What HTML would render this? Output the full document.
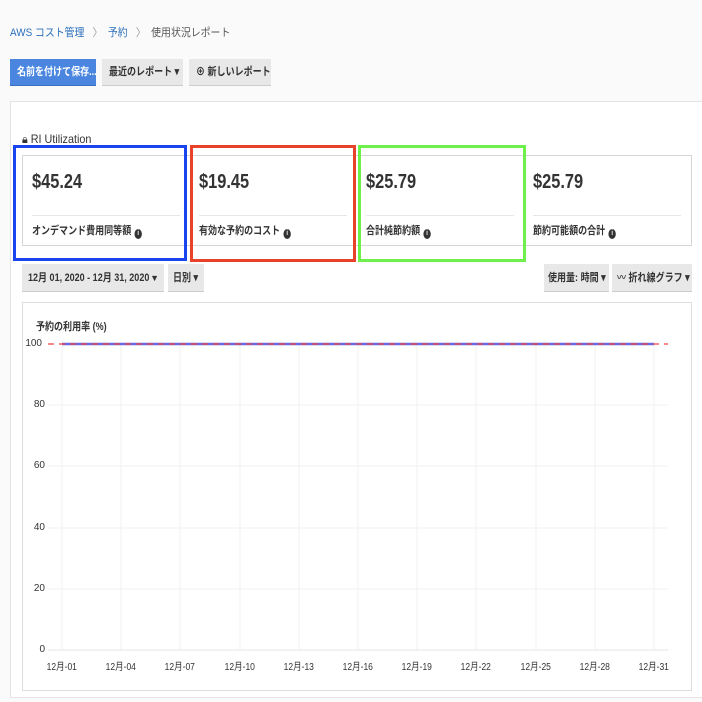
<!DOCTYPE html>
<html><head><meta charset="utf-8"><style>
*{margin:0;padding:0;box-sizing:border-box}
body{width:702px;height:702px;overflow:hidden;background:#fafafa;font-family:"Liberation Sans","Noto Sans CJK JP",sans-serif;color:#333;position:relative}
.a{position:absolute;white-space:nowrap}
.c{display:inline-block;transform:scaleX(0.82);transform-origin:left center;white-space:nowrap}
.btn{position:absolute;height:27px;line-height:27px;font-size:11px;font-weight:bold;background:#e8e8e8;border-bottom:1px solid #ccc;color:#333;white-space:nowrap;overflow:hidden;padding-left:7px}
.val{font-size:20px;font-weight:bold;color:#333}
.lbl{font-size:11px;font-weight:bold;color:#333}
.info{display:inline-block;width:9px;height:10px;border-radius:50%;background:#333;color:#fff;font-size:7px;line-height:10px;text-align:center;vertical-align:-1px;margin-left:4px}
.hr{position:absolute;height:1px;background:#e6e6e6}
.yl{position:absolute;font-size:10px;width:20px;text-align:right;left:25px}
.xl{position:absolute;font-size:10px;top:658px;width:40px;text-align:center}
.xl span{display:inline-block;transform:scaleX(0.85)}
</style></head><body>
<div class="a" style="left:10px;top:24px;font-size:11px;color:#555"><span class="c" style="transform:scaleX(0.9)"><span style="color:#2a6ebb">AWS コスト管理</span> <span style="color:#999;margin:0 6px">〉</span><span style="color:#2a6ebb">予約</span> <span style="color:#999;margin:0 6px">〉</span>使用状況レポート</span></div>
<div class="btn" style="left:10px;top:59px;width:86px;background:#4a86e0;color:#fff;border-color:#3a70c0"><span class="c">名前を付けて保存...</span></div>
<div class="btn" style="left:102px;top:59px;width:81px"><span class="c">最近のレポート ▾</span></div>
<div class="btn" style="left:189px;top:59px;width:82px"><span class="c">⊕ 新しいレポート</span></div>
<div class="a" style="left:10px;top:101px;width:700px;height:597px;background:#fff;border:1px solid #e4e4e4"></div>
<div class="a" style="left:22px;top:132px;font-size:12px;color:#333"><span class="c" style="transform:scaleX(0.9)">🔒︎ RI Utilization</span></div>
<div class="a" style="left:22px;top:155px;width:670px;height:91px;border:1px solid #d6d6d6;background:#fff"></div>
<div class="a val" style="left:32px;top:171px"><span class="c">$45.24</span></div>
<div class="a val" style="left:199px;top:171px"><span class="c">$19.45</span></div>
<div class="a val" style="left:366px;top:171px"><span class="c">$25.79</span></div>
<div class="a val" style="left:533px;top:171px"><span class="c">$25.79</span></div>
<div class="hr" style="left:32px;top:215px;width:148px"></div>
<div class="hr" style="left:199px;top:215px;width:148px"></div>
<div class="hr" style="left:366px;top:215px;width:148px"></div>
<div class="hr" style="left:533px;top:215px;width:148px"></div>
<div class="a lbl" style="left:32px;top:222px"><span class="c">オンデマンド費用同等額<span class="info">i</span></span></div>
<div class="a lbl" style="left:199px;top:222px"><span class="c">有効な予約のコスト<span class="info">i</span></span></div>
<div class="a lbl" style="left:366px;top:222px"><span class="c">合計純節約額<span class="info">i</span></span></div>
<div class="a lbl" style="left:533px;top:222px"><span class="c">節約可能額の合計<span class="info">i</span></span></div>
<div class="a" style="left:13px;top:145px;width:174px;height:116px;border:3px solid #1a44f0"></div>
<div class="a" style="left:190px;top:145px;width:166px;height:117px;border:3px solid #e8432a"></div>
<div class="a" style="left:358px;top:145px;width:168px;height:117px;border:3px solid #6ef04a"></div>
<div class="btn" style="left:22px;top:264px;width:142px;height:28px;line-height:28px;padding-left:6px"><span class="c">12月 01, 2020 - 12月 31, 2020</span><span style="position:absolute;right:5px;font-size:9px">▼</span></div>
<div class="btn" style="left:168px;top:264px;width:36px;height:28px;line-height:28px;padding-left:5px"><span class="c">日別 ▾</span></div>
<div class="btn" style="left:544px;top:264px;width:65px;height:28px;line-height:28px;padding-left:4px"><span class="c">使用量: 時間 ▾</span></div>
<div class="btn" style="left:612px;top:264px;width:80px;height:28px;line-height:28px;padding-left:5px"><span class="c">〰 折れ線グラフ ▾</span></div>
<div class="a" style="left:22px;top:302px;width:670px;height:389px;border:1px solid #ddd;background:#fff"></div>
<div class="a" style="left:36px;top:318px;font-size:11px;font-weight:bold"><span class="c">予約の利用率 (%)</span></div>
<svg class="a" style="left:0;top:0" width="702" height="702">
<g stroke="#f2f2f2" stroke-width="1">
<line x1="62" y1="344" x2="62" y2="650"/><line x1="121" y1="344" x2="121" y2="650"/><line x1="180" y1="344" x2="180" y2="650"/><line x1="240" y1="344" x2="240" y2="650"/><line x1="299" y1="344" x2="299" y2="650"/><line x1="358" y1="344" x2="358" y2="650"/><line x1="417" y1="344" x2="417" y2="650"/><line x1="476" y1="344" x2="476" y2="650"/><line x1="536" y1="344" x2="536" y2="650"/><line x1="595" y1="344" x2="595" y2="650"/><line x1="654" y1="344" x2="654" y2="650"/>
<line x1="48" y1="405" x2="668" y2="405"/><line x1="48" y1="466" x2="668" y2="466"/><line x1="48" y1="528" x2="668" y2="528"/><line x1="48" y1="589" x2="668" y2="589"/><line x1="48" y1="650" x2="668" y2="650" stroke="#e4e4e4"/>
</g>
<line x1="62" y1="344" x2="654" y2="344" stroke="#6a6ae0" stroke-width="2.5"/>
<line x1="48" y1="344" x2="668" y2="344" stroke="#f04040" stroke-width="1.2" stroke-dasharray="6,5"/>
</svg>
<div class="yl" style="top:338px;left:22px">100</div>
<div class="yl" style="top:399px">80</div>
<div class="yl" style="top:460px">60</div>
<div class="yl" style="top:522px">40</div>
<div class="yl" style="top:583px">20</div>
<div class="yl" style="top:644px">0</div>
<div class="xl" style="left:42px"><span>12月-01</span></div><div class="xl" style="left:101px"><span>12月-04</span></div><div class="xl" style="left:160px"><span>12月-07</span></div><div class="xl" style="left:220px"><span>12月-10</span></div><div class="xl" style="left:279px"><span>12月-13</span></div><div class="xl" style="left:338px"><span>12月-16</span></div><div class="xl" style="left:397px"><span>12月-19</span></div><div class="xl" style="left:456px"><span>12月-22</span></div><div class="xl" style="left:516px"><span>12月-25</span></div><div class="xl" style="left:575px"><span>12月-28</span></div><div class="xl" style="left:634px"><span>12月-31</span></div>
</body></html>
